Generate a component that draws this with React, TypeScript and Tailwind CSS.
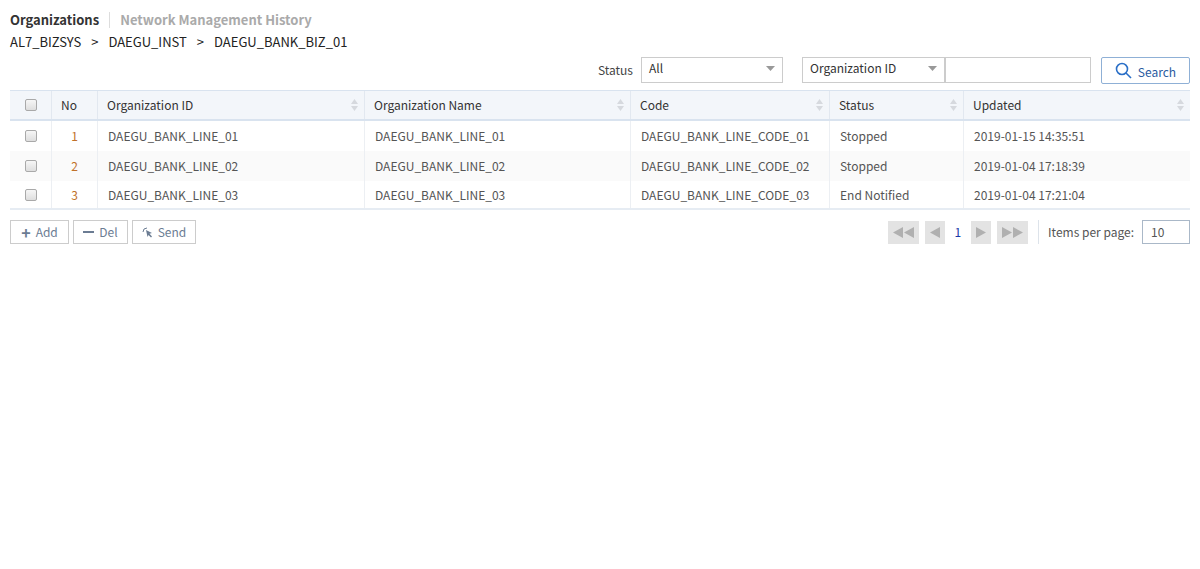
import React from "react";

const rows = [
  ["1", "DAEGU_BANK_LINE_01", "DAEGU_BANK_LINE_01", "DAEGU_BANK_LINE_CODE_01", "Stopped", "2019-01-15 14:35:51"],
  ["2", "DAEGU_BANK_LINE_02", "DAEGU_BANK_LINE_02", "DAEGU_BANK_LINE_CODE_02", "Stopped", "2019-01-04 17:18:39"],
  ["3", "DAEGU_BANK_LINE_03", "DAEGU_BANK_LINE_03", "DAEGU_BANK_LINE_CODE_03", "End Notified", "2019-01-04 17:21:04"],
];

const Sort = () => (
  <svg width="7" height="12" viewBox="0 0 7 12" className="shrink-0">
    <path d="M3.5 0L7 5H0z" fill="#d6d9de" />
    <path d="M3.5 12L7 7H0z" fill="#d6d9de" />
  </svg>
);

const Cb = () => <span className="inline-block w-[12px] h-[12px] border border-[#a9a9a9] rounded-[2px] bg-gradient-to-b from-[#f6f6f6] to-[#dedede]" />;

const Caret = () => (
  <svg width="9" height="5" viewBox="0 0 9 5"><path d="M0 0H9L4.5 5z" fill="#999" /></svg>
);

const widths = ["w-[42px]", "w-[46px]", "w-[267px]", "w-[266px]", "w-[199px]", "w-[134px]", "flex-1"];

export default function App() {
  return (
    <div className="w-[1200px] h-[569px] bg-white text-[12px] text-[#555]" style={{ fontFamily: '"Noto Sans CJK KR","Noto Sans",sans-serif' }}>
      <div className="px-[10px] pt-[10px]">
        <div className="flex items-center h-[20px]">
          <span className="text-[13px] font-bold text-[#333]">Organizations</span>
          <span className="mx-[10px] w-px h-[16px] bg-[#ddd]" />
          <span className="text-[13px] font-bold text-[#aaa]">Network Management History</span>
        </div>
        <div className="flex items-center h-[24px] text-[13px] text-[#222] gap-[10px]">
          <span>AL7_BIZSYS</span><span>&gt;</span><span>DAEGU_INST</span><span>&gt;</span><span>DAEGU_BANK_BIZ_01</span>
        </div>
        <div className="flex items-center justify-end h-[30px] mt-[1px]">
          <span className="mr-[8px] text-[#444]">Status</span>
          <div className="w-[142px] h-[26px] border border-[#ccc] flex items-center justify-between px-[7px] pb-[4px] text-[#333]">
            <span>All</span><Caret />
          </div>
          <div className="ml-[19px] w-[143px] h-[26px] border border-[#ccc] flex items-center justify-between px-[7px] pb-[4px] text-[#333]">
            <span>Organization ID</span><Caret />
          </div>
          <div className="w-[146px] h-[26px] border border-[#ccc]" />
          <div className="ml-[10px] w-[89px] h-[27px] border border-[#8fb0d6] rounded-[2px] flex items-center justify-center gap-[6px] text-[#2a5aa0]">
            <svg width="17" height="17" viewBox="0 0 17 17" fill="none" stroke="#2a6fc7" strokeWidth="1.6"><circle cx="7" cy="7" r="5.5" /><path d="M11 11l5 5" /></svg>
            <span className="mt-[3px]">Search</span>
          </div>
        </div>
        <div className="mt-[5px] border-t border-[#d9e3ef]">
          <div className="flex h-[30px] bg-[#f3f6fa] border-b-2 border-[#d9e3ef] text-[#333]">
            {["", "No", "Organization ID", "Organization Name", "Code", "Status", "Updated"].map((h, i) => (
              <div key={i} className={`${widths[i]} flex items-center ${i === 0 ? "justify-center" : "justify-between pl-[9px] pr-[6px]"} ${i < 6 ? "border-r border-[#e2e8f0]" : ""}`}>
                {i === 0 ? <Cb /> : <span>{h}</span>}
                {i > 1 && <Sort />}
              </div>
            ))}
          </div>
          {rows.map((r, ri) => (
            <div key={ri} className={`flex ${ri === 1 ? "bg-[#fafafa]" : ""} ${ri === 2 ? "border-b-2 border-[#e6ecf3] h-[29px]" : "h-[30px]"}`}>
              {["", ...r].map((c, i) => (
                <div key={i} className={`${widths[i]} flex items-center ${i <= 1 ? "justify-center" : "pl-[10px]"} ${i < 6 ? "border-r border-[#eceff3]" : ""} ${i === 1 ? "text-[#c0712a]" : "text-[#555]"}`}>
                  {i === 0 ? <Cb /> : c}
                </div>
              ))}
            </div>
          ))}
        </div>
        <div className="flex items-center justify-between mt-[10px]">
          <div className="flex gap-[4px] text-[#6b7c93]">
            <div className="h-[24px] w-[59px] border border-[#ccc] flex items-center justify-center gap-[5px]"><span className="text-[16px] font-bold leading-none">+</span>Add</div>
            <div className="h-[24px] w-[55px] border border-[#ccc] flex items-center justify-center gap-[5px]"><span className="w-[11px] h-[2px] bg-[#6b7c93]" />Del</div>
            <div className="h-[24px] w-[64px] border border-[#ccc] flex items-center justify-center gap-[5px]">
              <svg width="11" height="11" viewBox="0 0 11 11" fill="#6b7c93"><path d="M4 3l6 3-2.5 0.8L10 9.5 9 10.5 6.5 8 5.5 10z" /><path d="M1 5a4 4 0 0 1 4-4" stroke="#6b7c93" fill="none" /></svg>
              Send</div>
          </div>
          <div className="flex items-center">
            <div className="w-[31px] h-[23px] bg-[#e3e3e3] flex items-center justify-center"><svg width="22" height="11" viewBox="0 0 22 11" fill="#b0b0b0"><path d="M0 5.5L10 0v11zM11 5.5L21 0v11z" /></svg></div>
            <div className="ml-[6px] w-[20px] h-[23px] bg-[#e3e3e3] flex items-center justify-center"><svg width="10" height="11" viewBox="0 0 10 11" fill="#b0b0b0"><path d="M0 5.5L10 0v11z" /></svg></div>
            <span className="mx-[9px] text-[#1a3aa8]">1</span>
            <div className="ml-[1px] w-[20px] h-[23px] bg-[#e3e3e3] flex items-center justify-center"><svg width="10" height="11" viewBox="0 0 10 11" fill="#b0b0b0"><path d="M10 5.5L0 0v11z" /></svg></div>
            <div className="ml-[6px] w-[31px] h-[23px] bg-[#e3e3e3] flex items-center justify-center"><svg width="22" height="11" viewBox="0 0 22 11" fill="#b0b0b0"><path d="M10 5.5L0 0v11zM21 5.5L11 0v11z" /></svg></div>
            <span className="ml-[10px] w-px h-[24px] bg-[#dde3ea]" />
            <span className="ml-[9px] text-[#555]">Items per page:</span>
            <div className="ml-[8px] w-[48px] h-[24px] border border-[#aab8c8] flex items-center pl-[8px]">10</div>
          </div>
        </div>
      </div>
    </div>
  );
}
